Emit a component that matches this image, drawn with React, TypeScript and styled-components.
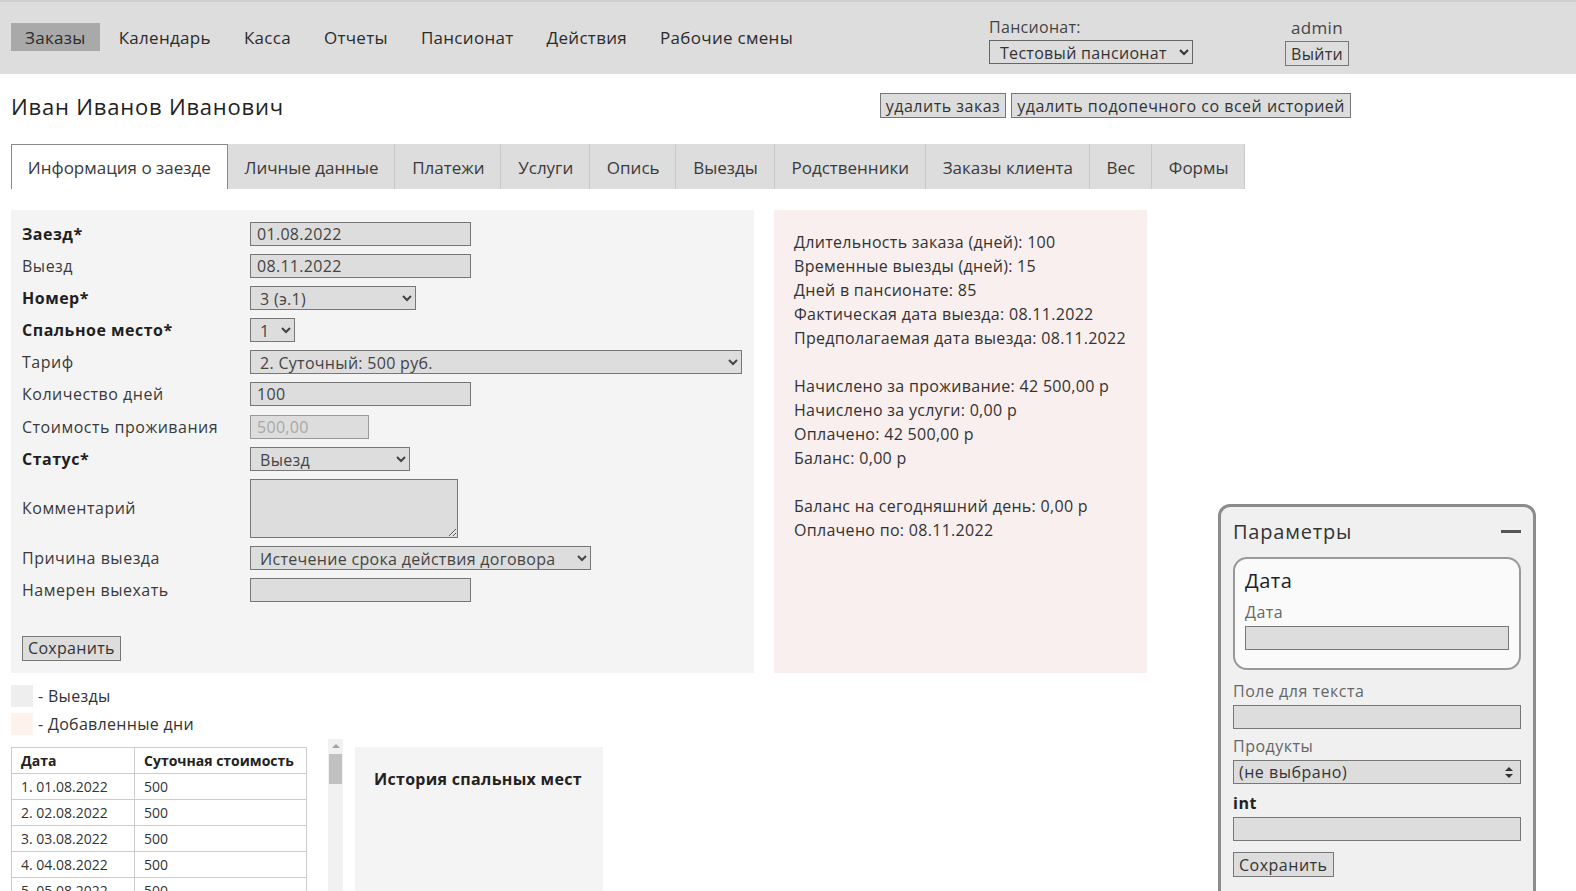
import { createGlobalStyle } from "styled-components";
import styled from "styled-components";

const GlobalStyle = createGlobalStyle`
  body {
    margin: 0;
    font-family: "Open Sans", "Noto Sans", sans-serif;
    font-size: 16px;
    letter-spacing: 0.3px;
    color: #333;
    background: #fff;
  }
  * {
    box-sizing: border-box;
  }
  input, select, textarea, button {
    letter-spacing: inherit;
  }
`;

const Header = styled.header`
  height: 74px;
  background: #dddddd;
  border-top: 2px solid #cfcfcf;
  display: flex;
  align-items: center;
  padding: 0 11px;
`;

const Nav = styled.nav`
  display: flex;
  align-items: center;
  gap: 5px;
  margin-top: -2px;
`;

const NavItem = styled.a<{ $active?: boolean }>`
  display: flex;
  align-items: center;
  height: 28px;
  padding: 0 14px;
  font-size: 17px;
  color: #2b2b2b;
  text-decoration: none;
  background: ${(p) => (p.$active ? "#a9a9a9" : "transparent")};
  cursor: pointer;
`;

const HeaderRight = styled.div`
  display: flex;
  align-items: flex-start;
  align-self: flex-start;
  margin-top: 15px;
  margin-left: auto;
  margin-right: 216px;
  gap: 92px;
`;

const Block = styled.div<{ $center?: boolean }>`
  display: flex;
  flex-direction: column;
  align-items: ${(p) => (p.$center ? "center" : "flex-start")};
  gap: 3px;
`;

const SmallLabel = styled.span`
  font-size: 16px;
  color: #444;
  line-height: 20px;
`;

const UserName = styled.span`
  font-size: 17px;
  color: #444;
  line-height: 21px;
`;

const Button = styled.button`
  font-family: inherit;
  font-size: 16px;
  color: #333;
  background: #dddddd;
  border: 1px solid #777;
  border-radius: 0;
  height: 25px;
  padding: 0 5px;
  cursor: pointer;
`;

const HeaderSelect = styled.select`
  font-family: inherit;
  font-size: 16px;
  color: #333;
  background: #dddddd;
  border: 1px solid #666;
  border-radius: 0;
  width: 204px;
  height: 24px;
  padding: 0 6px;
`;

const Page = styled.main`
  padding: 0 11px;
`;

const TitleRow = styled.div`
  display: flex;
  align-items: center;
  justify-content: space-between;
  width: 1340px;
  height: 65px;
  padding-bottom: 2px;
`;

const Title = styled.h1`
  margin: 0;
  font-size: 22px;
  font-weight: 400;
  letter-spacing: 0.8px;
  color: #222;
`;

const ButtonGroup = styled.div`
  display: flex;
  gap: 5px;
  letter-spacing: 0.5px;
`;

const Tabs = styled.div`
  display: flex;
  margin-top: 5px;
  letter-spacing: 0;
`;

const Tab = styled.div<{ $active?: boolean }>`
  height: 45px;
  display: flex;
  align-items: center;
  padding: 0 15.8px;
  font-size: 17px;
  color: #3a3a3a;
  background: ${(p) => (p.$active ? "#fff" : "#dddddd")};
  border: 1px solid ${(p) => (p.$active ? "#8a8a8a" : "#dddddd")};
  border-bottom: none;
  border-right: 1px solid ${(p) => (p.$active ? "#8a8a8a" : "#c8c8c8")};
  cursor: pointer;
`;

const Panels = styled.div`
  display: flex;
  gap: 20px;
  margin-top: 21px;
`;

const FormPanel = styled.section`
  width: 743px;
  height: 463px;
  background: #f4f4f4;
  padding: 12px 11px 0 11px;
`;

const FormGrid = styled.div`
  display: grid;
  grid-template-columns: 228px 1fr;
  row-gap: 8.1px;
  align-items: center;
`;

const Label = styled.label<{ $bold?: boolean }>`
  font-size: 16px;
  letter-spacing: 0.5px;
  color: ${(p) => (p.$bold ? "#1f1f1f" : "#3a3a3a")};
  font-weight: ${(p) => (p.$bold ? 700 : 400)};
`;

const Input = styled.input<{ $w?: number }>`
  font-family: inherit;
  font-size: 16px;
  color: #444;
  width: ${(p) => p.$w ?? 221}px;
  height: 24px;
  padding: 0 6px;
  background: #dddddd;
  border: 1px solid #777;
  border-radius: 0;
  &:disabled {
    color: #a8a8a8;
    border-color: #999;
  }
`;

const Select = styled.select<{ $w: number }>`
  font-family: inherit;
  font-size: 16px;
  color: #444;
  width: ${(p) => p.$w}px;
  height: 24px;
  padding: 0 5px;
  background: #dddddd;
  border: 1px solid #777;
  border-radius: 0;
`;

const TextArea = styled.textarea`
  font-family: inherit;
  width: 208px;
  height: 59px;
  background: #dddddd;
  border: 1px solid #777;
  border-radius: 0;
`;

const SaveRow = styled.div`
  margin-top: 34px;
`;

const InfoPanel = styled.section`
  width: 373px;
  height: 463px;
  background: #f8efee;
  padding: 20px 20px;
  font-size: 16px;
  letter-spacing: 0.3px;
  line-height: 24px;
  white-space: nowrap;
  color: #333;
`;

const InfoLine = styled.div<{ $gap?: boolean }>`
  margin-top: ${(p) => (p.$gap ? "24px" : "0")};
`;

const Legend = styled.div`
  display: flex;
  flex-direction: column;
  gap: 6px;
  margin-top: 12px;
`;

const LegendRow = styled.div`
  display: flex;
  align-items: center;
  gap: 5px;
  font-size: 16px;
  color: #333;
`;

const Swatch = styled.span<{ $color: string }>`
  width: 22px;
  height: 22px;
  background: ${(p) => p.$color};
`;

const BottomRow = styled.div`
  display: flex;
  align-items: flex-start;
  gap: 12px;
  margin-top: 4px;
`;

const ScrollArea = styled.div`
  display: flex;
  width: 332px;
  height: 152px;
`;

const Viewport = styled.div`
  flex: 1;
  overflow: hidden;
  padding-top: 8px;
`;

const ScrollTrack = styled.div`
  width: 15px;
  background: #f1f1f1;
  display: flex;
  flex-direction: column;
  align-items: center;
`;

const ScrollArrow = styled.span`
  margin-top: 5px;
  width: 0;
  height: 0;
  border-left: 4px solid transparent;
  border-right: 4px solid transparent;
  border-bottom: 4px solid #a3a3a3;
`;

const ScrollThumb = styled.span`
  margin-top: 6px;
  width: 13px;
  height: 30px;
  background: #c1c1c1;
`;

const Table = styled.table`
  width: 296px;
  border-collapse: collapse;
  font-size: 14px;
  letter-spacing: 0;
  color: #333;
  white-space: nowrap;
  td,
  th {
    border: 1px solid #cccccc;
    height: 26px;
    padding: 0 9px;
    text-align: left;
  }
  th {
    font-weight: 700;
    color: #222;
  }
  td:first-child,
  th:first-child {
    width: 123px;
  }
`;

const HistoryPanel = styled.section`
  width: 248px;
  height: 160px;
  margin-top: 8px;
  background: #f4f4f4;
  padding: 21px 19px;
`;

const HistoryTitle = styled.h3`
  margin: 0;
  font-size: 16px;
  font-weight: 700;
  color: #222;
`;

const ParamsWidget = styled.aside`
  position: fixed;
  left: 1218px;
  top: 504px;
  bottom: -20px;
  width: 318px;
  background: #f0f0f0;
  border: 3px solid #8c8c8c;
  border-radius: 12px;
  padding: 9px 12px;
  display: flex;
  flex-direction: column;
  letter-spacing: 0.5px;
`;

const ParamsHead = styled.div`
  display: flex;
  align-items: center;
  justify-content: space-between;
  height: 30px;
`;

const ParamsTitle = styled.span`
  font-size: 20px;
  letter-spacing: 0.8px;
  color: #333;
`;

const Minus = styled.span`
  width: 20px;
  height: 3px;
  background: #555;
`;

const Group = styled.div`
  margin-top: 11px;
  background: #fafafa;
  border: 2px solid #999;
  border-radius: 14px;
  padding: 9px 10px 18px 10px;
`;

const GroupTitle = styled.div`
  font-size: 20px;
  font-weight: 500;
  color: #222;
  line-height: 26px;
`;

const FieldLabel = styled.div<{ $bold?: boolean }>`
  font-size: 16px;
  line-height: 22px;
  margin-top: ${(p) => (p.$bold ? "8px" : "6px")};
  color: ${(p) => (p.$bold ? "#222" : "#666")};
  font-weight: ${(p) => (p.$bold ? 700 : 400)};
`;

const GroupLabel = styled(FieldLabel)`
  margin-top: 7px;
`;

const FirstLabel = styled(FieldLabel)`
  margin-top: 10px;
`;

const FullInput = styled.input`
  width: 100%;
  height: 24px;
  background: #dddddd;
  border: 1px solid #777;
  border-radius: 0;
  margin-top: 3px;
`;

const SelectWrap = styled.div`
  position: relative;
  margin-top: 3px;
`;

const FullSelect = styled.select`
  appearance: none;
  width: 100%;
  height: 24px;
  font-family: inherit;
  font-size: 16px;
  letter-spacing: 0.5px;
  color: #333;
  background: #dddddd;
  border: 1px solid #777;
  border-radius: 0;
  padding: 0 5px;
`;

const Arrows = styled.svg`
  position: absolute;
  right: 8px;
  top: 7px;
  pointer-events: none;
`;

const WidgetButton = styled(Button)`
  align-self: flex-start;
  margin-top: 11px;
  letter-spacing: 0.5px;
`;

const tabs = [
  "Информация о заезде",
  "Личные данные",
  "Платежи",
  "Услуги",
  "Опись",
  "Выезды",
  "Родственники",
  "Заказы клиента",
  "Вес",
  "Формы",
];

const navItems = [
  "Заказы",
  "Календарь",
  "Касса",
  "Отчеты",
  "Пансионат",
  "Действия",
  "Рабочие смены",
];

const pad = (n: number) => (n < 10 ? "0" + n : "" + n);

// only the rows that fit in the visible part of the list
const days = Array.from({ length: 6 }, (_, i) => {
  const d = new Date(2022, 7, 1 + i);
  return `${i + 1}. ${pad(d.getDate())}.${pad(d.getMonth() + 1)}.${d.getFullYear()}`;
});

const App = () => {
  return (
    <>
      <GlobalStyle />
      <Header>
        <Nav>
          {navItems.map((item, i) => (
            <NavItem key={item} $active={i === 0}>
              {item}
            </NavItem>
          ))}
        </Nav>
        <HeaderRight>
          <Block>
            <SmallLabel>Пансионат:</SmallLabel>
            <HeaderSelect defaultValue="test">
              <option value="test">Тестовый пансионат</option>
            </HeaderSelect>
          </Block>
          <Block $center>
            <UserName>admin</UserName>
            <Button>Выйти</Button>
          </Block>
        </HeaderRight>
      </Header>
      <Page>
        <TitleRow>
          <Title>Иван Иванов Иванович</Title>
          <ButtonGroup>
            <Button>удалить заказ</Button>
            <Button>удалить подопечного со всей историей</Button>
          </ButtonGroup>
        </TitleRow>
        <Tabs>
          {tabs.map((t, i) => (
            <Tab key={t} $active={i === 0}>
              {t}
            </Tab>
          ))}
        </Tabs>
        <Panels>
          <FormPanel>
            <FormGrid>
              <Label $bold>Заезд*</Label>
              <Input defaultValue="01.08.2022" />
              <Label>Выезд</Label>
              <Input defaultValue="08.11.2022" />
              <Label $bold>Номер*</Label>
              <Select $w={166} defaultValue="3">
                <option value="3">3 (э.1)</option>
              </Select>
              <Label $bold>Спальное место*</Label>
              <Select $w={45} defaultValue="1">
                <option value="1">1</option>
              </Select>
              <Label>Тариф</Label>
              <Select $w={492} defaultValue="2">
                <option value="2">2. Суточный: 500 руб.</option>
              </Select>
              <Label>Количество дней</Label>
              <Input defaultValue="100" />
              <Label>Стоимость проживания</Label>
              <Input $w={119} defaultValue="500,00" disabled />
              <Label $bold>Статус*</Label>
              <Select $w={160} defaultValue="out">
                <option value="out">Выезд</option>
              </Select>
              <Label>Комментарий</Label>
              <TextArea />
              <Label>Причина выезда</Label>
              <Select $w={341} defaultValue="end">
                <option value="end">Истечение срока действия договора</option>
              </Select>
              <Label>Намерен выехать</Label>
              <Input />
            </FormGrid>
            <SaveRow>
              <Button>Сохранить</Button>
            </SaveRow>
          </FormPanel>
          <InfoPanel>
            <InfoLine>Длительность заказа (дней): 100</InfoLine>
            <InfoLine>Временные выезды (дней): 15</InfoLine>
            <InfoLine>Дней в пансионате: 85</InfoLine>
            <InfoLine>Фактическая дата выезда: 08.11.2022</InfoLine>
            <InfoLine>Предполагаемая дата выезда: 08.11.2022</InfoLine>
            <InfoLine $gap>Начислено за проживание: 42 500,00 р</InfoLine>
            <InfoLine>Начислено за услуги: 0,00 р</InfoLine>
            <InfoLine>Оплачено: 42 500,00 р</InfoLine>
            <InfoLine>Баланс: 0,00 р</InfoLine>
            <InfoLine $gap>Баланс на сегодняшний день: 0,00 р</InfoLine>
            <InfoLine>Оплачено по: 08.11.2022</InfoLine>
          </InfoPanel>
        </Panels>
        <Legend>
          <LegendRow>
            <Swatch $color="#eeeeee" />- Выезды
          </LegendRow>
          <LegendRow>
            <Swatch $color="#fdf3ec" />- Добавленные дни
          </LegendRow>
        </Legend>
        <BottomRow>
          <ScrollArea>
            <Viewport>
              <Table>
                <thead>
                  <tr>
                    <th>Дата</th>
                    <th>Суточная стоимость</th>
                  </tr>
                </thead>
                <tbody>
                  {days.map((d) => (
                    <tr key={d}>
                      <td>{d}</td>
                      <td>500</td>
                    </tr>
                  ))}
                </tbody>
              </Table>
            </Viewport>
            <ScrollTrack>
              <ScrollArrow />
              <ScrollThumb />
            </ScrollTrack>
          </ScrollArea>
          <HistoryPanel>
            <HistoryTitle>История спальных мест</HistoryTitle>
          </HistoryPanel>
        </BottomRow>
      </Page>
      <ParamsWidget>
        <ParamsHead>
          <ParamsTitle>Параметры</ParamsTitle>
          <Minus />
        </ParamsHead>
        <Group>
          <GroupTitle>Дата</GroupTitle>
          <GroupLabel>Дата</GroupLabel>
          <FullInput />
        </Group>
        <FirstLabel>Поле для текста</FirstLabel>
        <FullInput />
        <FieldLabel>Продукты</FieldLabel>
        <SelectWrap>
          <FullSelect defaultValue="none">
            <option value="none">(не выбрано)</option>
          </FullSelect>
          <Arrows width="8" height="11" viewBox="0 0 8 11">
            <path d="M4 0 L8 4 L0 4 Z M0 7 L8 7 L4 11 Z" fill="#333" />
          </Arrows>
        </SelectWrap>
        <FieldLabel $bold>int</FieldLabel>
        <FullInput />
        <WidgetButton>Сохранить</WidgetButton>
      </ParamsWidget>
    </>
  );
};

export default App;
